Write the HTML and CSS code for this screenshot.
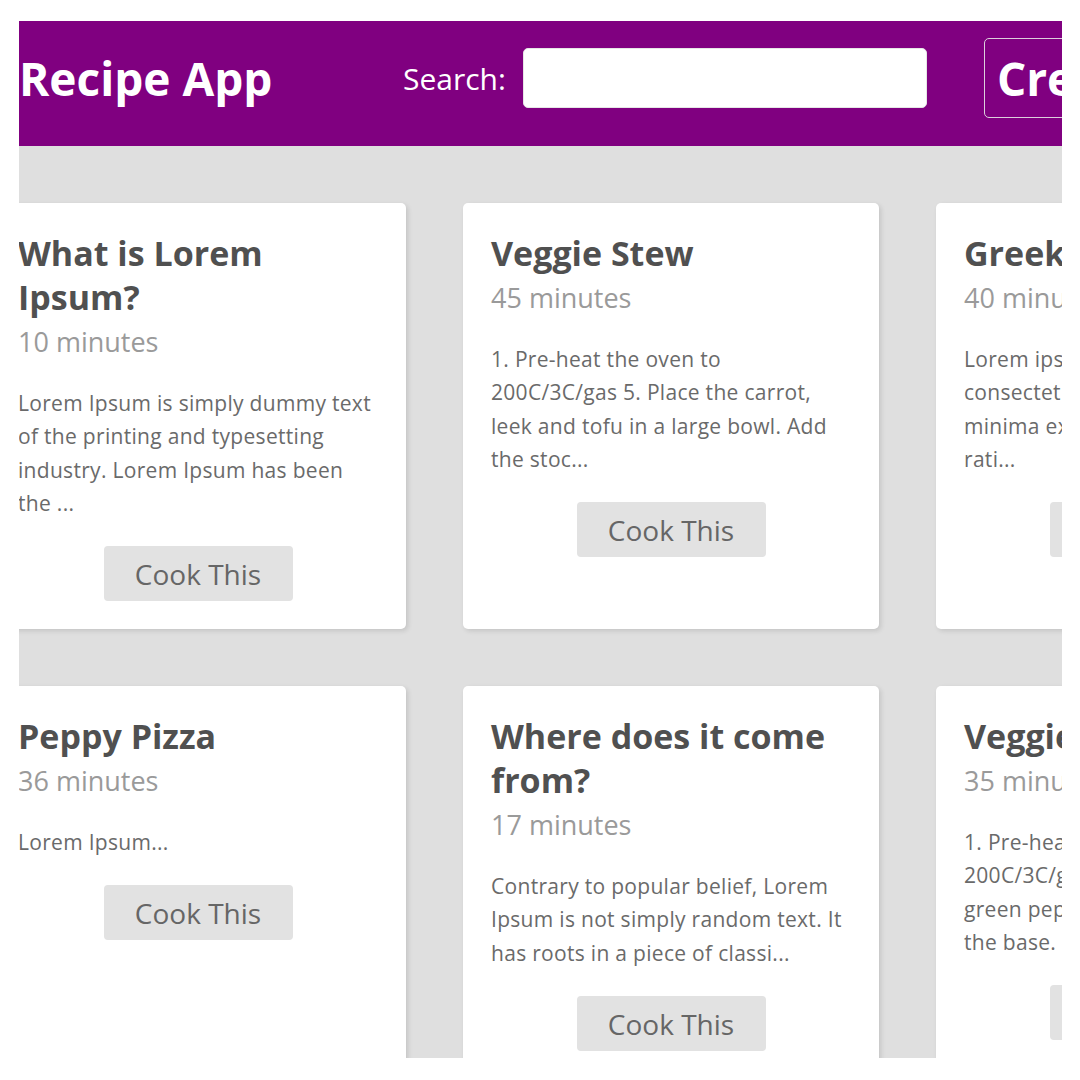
FILE: index.html
```html
<!DOCTYPE html>
<html>
    <head>
        <meta charset="UTF-8">
        <title>Recipe App</title>
        <link rel="stylesheet" href="styles.css">
    </head>
    <body>
        <div class="viewport">
            <div class="topBar">
                <h1 class="appTitle">Recipe App</h1>
                <label class="searchLabel" for="search">Search:</label>
                <input type="text" id="search" class="searchInput">
                <button class="btnCreate">Create Recipe</button>
            </div>

            <div class="recipeGrid">
                <div class="recipeCard">
                    <h2 class="recipeTitle">What is Lorem Ipsum?</h2>
                    <div class="recipeTime">10 minutes</div>
                    <p class="recipeText">Lorem Ipsum is simply dummy text of the printing and typesetting industry. Lorem Ipsum has been the ...</p>
                    <button class="btnCook">Cook This</button>
                </div>
                <div class="recipeCard">
                    <h2 class="recipeTitle">Veggie Stew</h2>
                    <div class="recipeTime">45 minutes</div>
                    <p class="recipeText">1. Pre-heat the oven to 200C/3C/gas 5. Place the carrot, leek and tofu in a large bowl. Add the stoc...</p>
                    <button class="btnCook">Cook This</button>
                </div>
                <div class="recipeCard">
                    <h2 class="recipeTitle">Greek Salad</h2>
                    <div class="recipeTime">40 minutes</div>
                    <p class="recipeText">Lorem ipsum dolor sit amet, consectetur adipisicing elit. Quas minima ex nobis dolore eos quasi, rati...</p>
                    <button class="btnCook">Cook This</button>
                </div>
                <div class="recipeCard">
                    <h2 class="recipeTitle">Peppy Pizza</h2>
                    <div class="recipeTime">36 minutes</div>
                    <p class="recipeText">Lorem Ipsum...</p>
                    <button class="btnCook">Cook This</button>
                </div>
                <div class="recipeCard">
                    <h2 class="recipeTitle">Where does it come from?</h2>
                    <div class="recipeTime">17 minutes</div>
                    <p class="recipeText">Contrary to popular belief, Lorem Ipsum is not simply random text. It has roots in a piece of classi...</p>
                    <button class="btnCook">Cook This</button>
                </div>
                <div class="recipeCard">
                    <h2 class="recipeTitle">Veggie Pizza</h2>
                    <div class="recipeTime">35 minutes</div>
                    <p class="recipeText">1. Pre-heat the oven to 200C/3C/gas 5. Place the tomato, green peppers and onions across the base. In...</p>
                    <button class="btnCook">Cook This</button>
                </div>
            </div>
        </div>
    </body>
</html>
```

FILE: styles.css
```css
body {
    margin: 0;
    background: #ffffff;
    font-family: "Open Sans", Lato, sans-serif;
}

.viewport {
    margin: 21px 18px 22px 19px;
    height: 1037px;
    overflow: hidden;
    background: #dfdfdf;
}

.topBar {
    display: flex;
    align-items: center;
    box-sizing: border-box;
    height: 125px;
    padding-bottom: 11px;
    background: #800080;
    color: #ffffff;
    white-space: nowrap;
}

.appTitle {
    flex: 0 0 384px;
    margin: 0;
    font-size: 46px;
    font-weight: 700;
}

.searchLabel {
    margin-right: 17px;
    font-size: 30px;
}

.searchInput {
    flex: 0 0 auto;
    box-sizing: border-box;
    width: 404px;
    height: 60px;
    border: 1px solid #e6e6e6;
    border-radius: 5px;
    background: #ffffff;
}

.btnCreate {
    flex: 0 0 auto;
    height: 80px;
    margin-left: 57px;
    padding: 0 12px;
    border: 1px solid #dccfdc;
    border-radius: 5px;
    background: transparent;
    color: #ffffff;
    font-family: inherit;
    font-size: 46px;
    font-weight: 700;
}

.recipeGrid {
    display: grid;
    grid-template-columns: repeat(3, 416px);
    gap: 57px;
    margin: 57px 0 0 -29px;
}

.recipeCard {
    box-sizing: border-box;
    padding: 28px;
    background: #ffffff;
    border-radius: 5px;
    box-shadow: 2px 2px 5px rgba(0, 0, 0, 0.12);
}

.recipeTitle {
    margin: 0;
    font-size: 34px;
    line-height: 44px;
    font-weight: 700;
    color: #505050;
}

.recipeTime {
    font-size: 27px;
    line-height: 46px;
    color: #9a9a9a;
}

.recipeText {
    margin: 22px 0 26px 0;
    font-size: 21px;
    line-height: 33.3px;
    letter-spacing: 0.3px;
    color: #6a6a6a;
}

.btnCook {
    display: block;
    width: 189px;
    height: 55px;
    margin: 0 auto;
    border: none;
    border-radius: 4px;
    background: #e2e2e2;
    color: #666666;
    font-family: inherit;
    font-size: 28px;
}
```
